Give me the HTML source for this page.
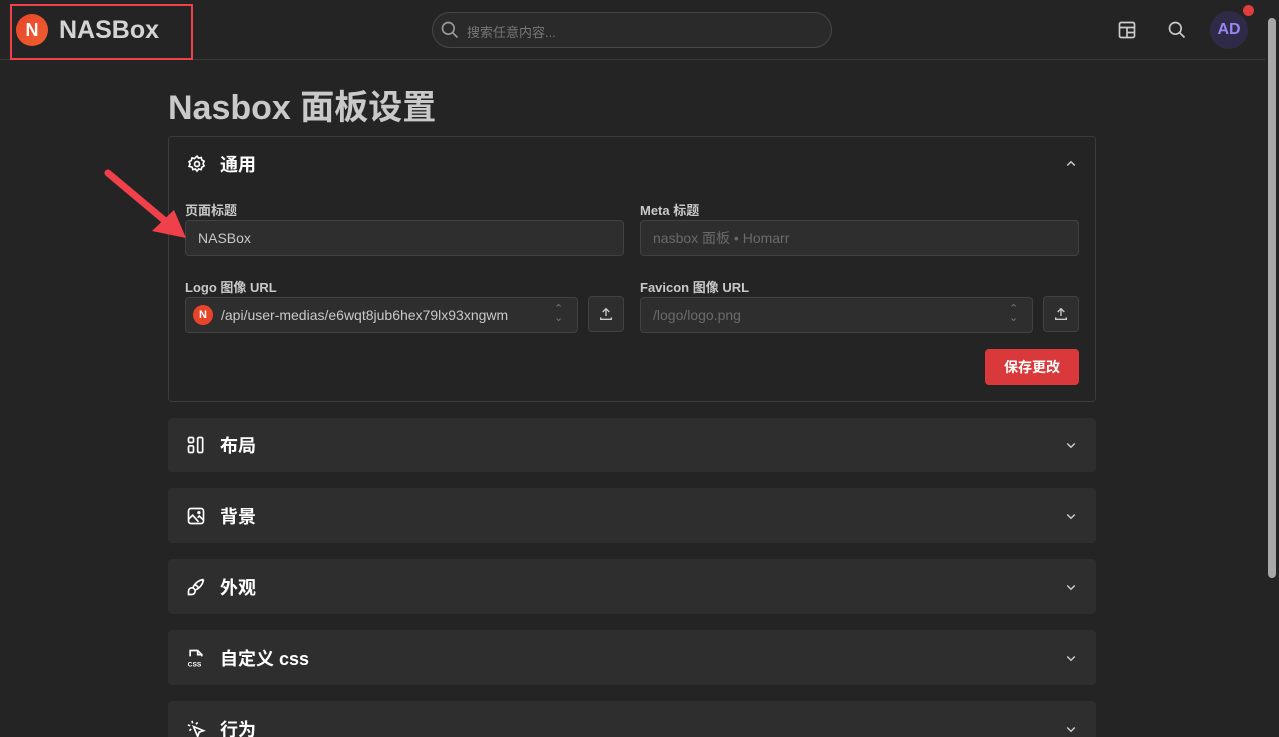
<!DOCTYPE html><html><head><meta charset="utf-8"><style>
*{box-sizing:border-box;margin:0;padding:0}
html,body{width:1279px;height:737px;overflow:hidden}
body{background:#242424;font-family:"Liberation Sans","Noto Sans CJK SC",sans-serif;color:#c9c9c9;position:relative}
.a{position:absolute}
.inp{position:absolute;background:#2e2e2e;border:1px solid #424242;border-radius:4px;font-size:14px;color:#c9c9c9;display:flex;align-items:center;padding-left:12px}
.lbl{position:absolute;font-size:13px;font-weight:bold;color:#c9c9c9}
.card{position:absolute;left:168px;width:928px;background:#2e2e2e;border-radius:4px}
.card .t{position:absolute;left:52px;top:50%;transform:translateY(-50%);font-size:18px;font-weight:bold;color:#fff}
.card svg.i{position:absolute;left:18px;top:50%;transform:translateY(-50%)}
.card .ch{position:absolute;right:16px;top:50%;transform:translateY(-50%)}
</style></head><body>
<div class="a" style="left:0;top:59px;width:1265px;height:1px;background:#3a3a3a"></div>
<div class="a" style="left:10px;top:4px;width:183px;height:56px;border:2px solid #f0414a"></div>
<div class="a" style="left:16px;top:14px;width:32px;height:32px;border-radius:50%;background:linear-gradient(135deg,#e8442a,#f06030);color:#fff;font-weight:bold;font-size:18px;text-align:center;line-height:32px">N</div>
<div class="a" style="left:59px;top:16px;font-size:25px;font-weight:bold;color:#d4d4d4">NASBox</div>
<div class="a" style="left:432px;top:12px;width:400px;height:36px;border:1px solid #474747;border-radius:18px;background:#2a2a2a"></div>
<svg class="a" style="left:440px;top:20px" width="20" height="20" viewBox="0 0 24 24" fill="none" stroke="#999" stroke-width="2"><circle cx="10" cy="10" r="7"/><path d="M21 21l-6-6"/></svg>
<div class="a" style="left:467px;top:22px;font-size:13px;color:#777">搜索任意内容...</div>
<svg class="a" style="left:1117px;top:20px" width="20" height="20" viewBox="0 0 24 24" fill="none" stroke="#ccc" stroke-width="2"><rect x="3" y="3" width="18" height="18" rx="2"/><path d="M3 9h18M12 9v12M12 15h9"/></svg>
<svg class="a" style="left:1167px;top:20px" width="20" height="20" viewBox="0 0 24 24" fill="none" stroke="#ccc" stroke-width="2"><circle cx="10" cy="10" r="7"/><path d="M21 21l-6-6"/></svg>
<div class="a" style="left:1210px;top:11px;width:38px;height:38px;border-radius:50%;background:#2f2a48;color:#9a86f0;font-weight:bold;font-size:16px;text-align:center;line-height:38px">AD</div>
<div class="a" style="left:1243px;top:5px;width:11px;height:11px;border-radius:50%;background:#e03e3e"></div>
<div class="a" style="left:1265px;top:0;width:14px;height:737px;background:#242424"></div>
<div class="a" style="left:1268px;top:18px;width:8px;height:560px;background:#a8a8a8;border-radius:4px"></div>
<div class="a" style="left:168px;top:80px;font-size:34px;font-weight:bold;color:#c9c9c9">Nasbox 面板设置</div>
<div class="a" style="left:168px;top:136px;width:928px;height:266px;border:1px solid #3c3c3c;border-radius:4px"></div>
<svg class="a" style="left:187px;top:154px" width="20" height="20" viewBox="0 0 24 24" fill="none" stroke="#fff" stroke-width="2"><circle cx="12" cy="12" r="3"/><path d="M12 2.5l2 2.5 3-.8.8 3 2.7 1.5-1.2 2.8 1.2 2.8-2.7 1.5-.8 3-3-.8-2 2.5-2-2.5-3 .8-.8-3L2.5 14.8 3.7 12 2.5 9.2 5.2 7.7 6 4.7l3 .8z"/></svg>
<div class="a" style="left:220px;top:151px;font-size:18px;font-weight:bold;color:#fff">通用</div>
<svg class="a" style="left:1062px;top:155px" width="18" height="18" viewBox="0 0 24 24" fill="none" stroke="#ccc" stroke-width="2"><path d="M7 14l5-5 5 5"/></svg>
<div class="lbl" style="left:185px;top:200px">页面标题</div>
<div class="inp" style="left:185px;top:220px;width:439px;height:36px">NASBox</div>
<div class="lbl" style="left:640px;top:200px">Meta 标题</div>
<div class="inp" style="left:640px;top:220px;width:439px;height:36px;color:#6a6a6a">nasbox 面板 • Homarr</div>
<div class="lbl" style="left:185px;top:277px">Logo 图像 URL</div>
<div class="inp" style="left:185px;top:297px;width:393px;height:36px;padding-left:35px">/api/user-medias/e6wqt8jub6hex79lx93xngwm</div>
<div class="a" style="left:193px;top:305px;width:20px;height:20px;border-radius:50%;background:#e8442a;color:#fff;font-size:11px;font-weight:bold;text-align:center;line-height:20px">N</div>
<div class="a" style="left:554px;top:305px;font-size:11px;color:#777;line-height:9px">⌃<br>⌄</div>
<div class="inp" style="left:588px;top:296px;width:36px;height:36px;padding:0;justify-content:center"><svg width="16" height="16" viewBox="0 0 24 24" fill="none" stroke="#ccc" stroke-width="2"><path d="M4 17v3h16v-3M12 15V4M7 9l5-5 5 5"/></svg></div>
<div class="lbl" style="left:640px;top:277px">Favicon 图像 URL</div>
<div class="inp" style="left:640px;top:297px;width:393px;height:36px;color:#6a6a6a">/logo/logo.png</div>
<div class="a" style="left:1009px;top:305px;font-size:11px;color:#777;line-height:9px">⌃<br>⌄</div>
<div class="inp" style="left:1043px;top:296px;width:36px;height:36px;padding:0;justify-content:center"><svg width="16" height="16" viewBox="0 0 24 24" fill="none" stroke="#ccc" stroke-width="2"><path d="M4 17v3h16v-3M12 15V4M7 9l5-5 5 5"/></svg></div>
<div class="a" style="left:985px;top:349px;width:94px;height:36px;background:#d9393b;border-radius:4px;color:#fff;font-size:14px;font-weight:bold;text-align:center;line-height:36px">保存更改</div>
<svg class="a" style="left:100px;top:165px" width="90" height="80"><path d="M8 8L70 60" stroke="#f0414a" stroke-width="7" stroke-linecap="round"/><path d="M86 73L52 66 74 45z" fill="#f0414a"/></svg>
<div class="card" style="top:418px;height:54px"><svg class="i" width="20" height="20" viewBox="0 0 24 24" fill="none" stroke="#fff" stroke-width="2"><rect x="3" y="3" width="6" height="6" rx="1.5"/><rect x="3" y="13" width="6" height="8" rx="1.5"/><rect x="14" y="3" width="6" height="18" rx="1.5"/></svg><div class="t">布局</div><svg class="ch" width="18" height="18" viewBox="0 0 24 24" fill="none" stroke="#ccc" stroke-width="2"><path d="M7 10l5 5 5-5"/></svg></div>
<div class="card" style="top:488px;height:55px"><svg class="i" width="20" height="20" viewBox="0 0 24 24" fill="none" stroke="#fff" stroke-width="2"><rect x="3" y="3" width="18" height="18" rx="3"/><path d="M3 16l5-5 7 8M14 14l2-2 5 5"/><circle cx="15.5" cy="8" r="1"/></svg><div class="t">背景</div><svg class="ch" width="18" height="18" viewBox="0 0 24 24" fill="none" stroke="#ccc" stroke-width="2"><path d="M7 10l5 5 5-5"/></svg></div>
<div class="card" style="top:559px;height:55px"><svg class="i" width="20" height="20" viewBox="0 0 24 24" fill="none" stroke="#fff" stroke-width="2"><path d="M3 21v-4a4 4 0 1 1 4 4zM21 3a16 16 0 0 0-12.8 10.2M21 3a16 16 0 0 1-10.2 12.8M10.6 9a9 9 0 0 1 4.4 4.4"/></svg><div class="t">外观</div><svg class="ch" width="18" height="18" viewBox="0 0 24 24" fill="none" stroke="#ccc" stroke-width="2"><path d="M7 10l5 5 5-5"/></svg></div>
<div class="card" style="top:630px;height:55px"><svg class="i" width="20" height="20" viewBox="0 0 24 24" fill="none" stroke="#fff" stroke-width="2"><path d="M5 10V3h9l5 5v2M14 3v5h5"/><text x="2" y="22" font-size="8" font-weight="bold" fill="#fff" stroke="none" font-family="Liberation Sans">CSS</text></svg><div class="t">自定义 css</div><svg class="ch" width="18" height="18" viewBox="0 0 24 24" fill="none" stroke="#ccc" stroke-width="2"><path d="M7 10l5 5 5-5"/></svg></div>
<div class="card" style="top:701px;height:55px"><svg class="i" width="20" height="20" viewBox="0 0 24 24" fill="none" stroke="#fff" stroke-width="2"><path d="M9 9l5 12 1.8-5.2L21 14zM7.2 2.2l.8 2.9M5.1 8l-2.9-.8M14 4.1l-2.1 2.1M6.2 11.9l-2.1 2.1"/></svg><div class="t">行为</div><svg class="ch" width="18" height="18" viewBox="0 0 24 24" fill="none" stroke="#ccc" stroke-width="2"><path d="M7 10l5 5 5-5"/></svg></div>
</body></html>
